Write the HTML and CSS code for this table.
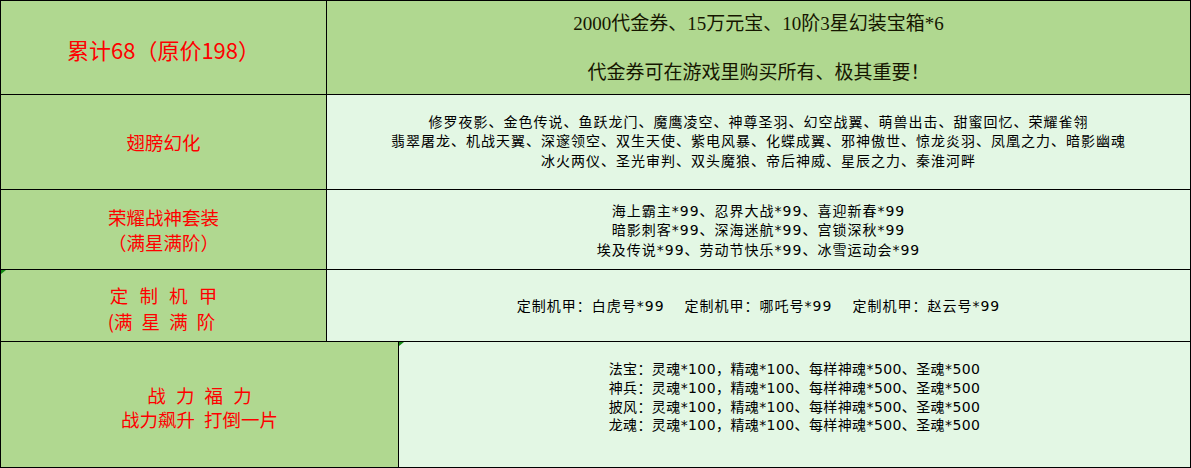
FILE: index.html
```html
<!DOCTYPE html>
<html lang="zh-CN">
<head>
<meta charset="utf-8">
<title>福利</title>
<link rel="stylesheet" href="styles.css">
</head>
<body>
<div class="sheet">
  <div class="cell label label-big">累计68（原价198）</div>
  <div class="cell head wide">
    <div>2000代金券、15万元宝、10阶3星幻装宝箱*6</div>
    <div>&nbsp;</div>
    <div>代金券可在游戏里购买所有、极其重要！</div>
  </div>

  <div class="cell label">翅膀幻化</div>
  <div class="cell content wide">
    <div>修罗夜影、金色传说、鱼跃龙门、魔鹰凌空、神尊圣羽、幻空战翼、萌兽出击、甜蜜回忆、荣耀雀翎</div>
    <div>翡翠屠龙、机战天翼、深邃领空、双生天使、紫电风暴、化蝶成翼、邪神傲世、惊龙炎羽、凤凰之力、暗影幽魂</div>
    <div>冰火两仪、圣光审判、双头魔狼、帝后神威、星辰之力、秦淮河畔</div>
  </div>

  <div class="cell label">
    <div>荣耀战神套装</div>
    <div>（满星满阶）</div>
  </div>
  <div class="cell content wide shift-down">
    <div>海上霸主*99、忍界大战*99、喜迎新春*99</div>
    <div>暗影刺客*99、深海迷航*99、宫锁深秋*99</div>
    <div>埃及传说*99、劳动节快乐*99、冰雪运动会*99</div>
  </div>

  <div class="cell label flag spaced">
    <div>定 制 机 甲</div>
    <div class="tight">(满 星 满 阶</div>
  </div>
  <div class="cell content wide">
    <div class="mecha">
      <span>定制机甲：白虎号*99</span>
      <span>定制机甲：哪吒号*99</span>
      <span>定制机甲：赵云号*99</span>
    </div>
  </div>

  <div class="cell label label-wide power">
    <div class="spaced-wide">战 力 福 力</div>
    <div class="gap-words">战力飙升 打倒一片</div>
  </div>
  <div class="cell content flag">
    <div class="list">
      <div>法宝：灵魂*100，精魂*100、每样神魂*500、圣魂*500</div>
      <div>神兵：灵魂*100，精魂*100、每样神魂*500、圣魂*500</div>
      <div>披风：灵魂*100，精魂*100、每样神魂*500、圣魂*500</div>
      <div>龙魂：灵魂*100，精魂*100、每样神魂*500、圣魂*500</div>
    </div>
  </div>
</div>
</body>
</html>
```

FILE: styles.css
```css
* {
  box-sizing: border-box;
  margin: 0;
  padding: 0;
}

body {
  margin: 0;
  background: #ffffff;
}

.sheet {
  display: grid;
  grid-template-columns: 326px 72px 792px;
  grid-template-rows: 94px 95px 80px 72px 126px;
  width: 1191px;
  border-top: 1px solid #000;
  border-left: 1px solid #000;
}

.cell {
  position: relative;
  display: flex;
  flex-direction: column;
  align-items: center;
  justify-content: center;
  text-align: center;
  border-right: 1px solid #000;
  border-bottom: 1px solid #000;
  white-space: nowrap;
}

.wide {
  grid-column: 2 / span 2;
}

.label {
  grid-column: 1;
  background: #b0d890;
  color: #ff0000;
  font-family: "Noto Sans CJK SC", sans-serif;
  font-size: 18.5px;
  line-height: 24.5px;
}

.label-big {
  font-size: 22px;
  line-height: 28px;
  padding-top: 3px;
}

.label-wide {
  grid-column: 1 / span 2;
}

.power {
  line-height: 24px;
  padding-top: 4px;
}

.spaced {
  line-height: 26px;
  padding-top: 4px;
  word-spacing: 7px;
}

.spaced .tight {
  word-spacing: 5px;
  padding-right: 4px;
}

.spaced-wide {
  word-spacing: 6px;
}

.gap-words {
  word-spacing: 5px;
}

.head {
  background: #b0d890;
  color: #161600;
  font-family: "Liberation Serif", "Noto Sans CJK SC", serif;
  font-size: 19px;
  line-height: 24.5px;
  padding-top: 3px;
}

.content {
  background: #e3f7e4;
  color: #000;
  font-family: "DejaVu Sans", "Noto Sans CJK SC", sans-serif;
  font-size: 14px;
  letter-spacing: 1px;
  line-height: 19.5px;
}

.shift-down {
  padding-top: 3px;
}

.mecha {
  display: flex;
  gap: 20px;
  padding-top: 2px;
}

.list {
  text-align: left;
  letter-spacing: 0.4px;
  line-height: 18.7px;
  margin-bottom: 14px;
}

.flag::before {
  content: "";
  position: absolute;
  top: 0;
  left: 0;
  border-top: 4px solid #138a13;
  border-right: 5px solid transparent;
}
```
